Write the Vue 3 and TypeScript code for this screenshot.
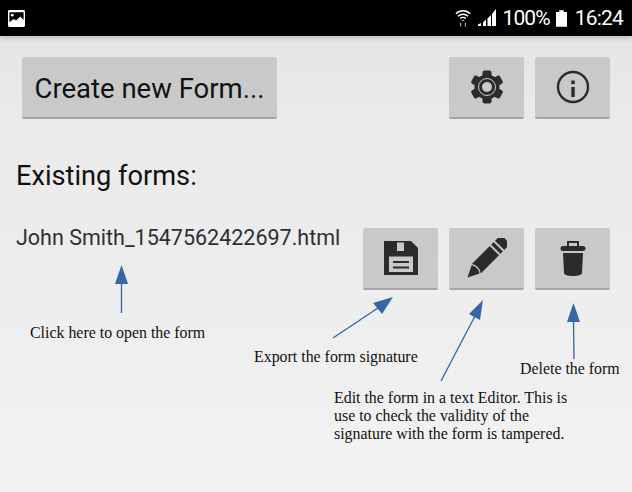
<template>
  <div class="screen">
    <header class="status-bar">
      <svg class="picture-icon" width="17" height="17" viewBox="0 0 18 18">
        <rect width="18" height="18" rx="1.5" fill="#fff" />
        <path d="M1.500 2.500h15v8l-3.500-3.500-4.500 4-2.500-1.500-4.500 3.500z" fill="#000" />
        <circle cx="4.500" cy="5.500" r="1.500" fill="#fff" />
      </svg>
      <div class="status-right">
        <svg width="16" height="20" viewBox="0 0 17 20" fill="none" stroke="#fff" stroke-width="1.500">
          <path d="M1 5.500a10.500 10.500 0 0 1 15 0" />
          <path d="M3.200 8.200a7.400 7.400 0 0 1 10.600 0" />
          <path d="M5.600 10.600a4 4 0 0 1 5.800 0" />
          <path d="M8.500 11.500l-1.600 1.400h3.200z" fill="#fff" stroke="none" />
          <path d="M6 15v4M11 15v4" stroke="#b5b5b5" stroke-width="1.200" />
        </svg>
        <svg class="signal" width="18" height="18" viewBox="0 0 18 18" fill="#fff">
          <path d="M0 15.500l3-1.500v3H0z" />
          <path d="M5 13.500l3-3V17H5z" />
          <path d="M9.500 9.500L13 6v11H9.500z" />
          <path d="M14 5l4-5v17h-4z" />
        </svg>
        <span class="percent">100%</span>
        <svg class="battery" width="11" height="17" viewBox="0 0 12 18" fill="#fff">
          <path d="M3.500 0h5v2h3.500v16H0V2h3.500z" />
        </svg>
        <span class="clock">16:24</span>
      </div>
    </header>

    <main class="content">
      <div class="top-row">
        <button class="btn create-btn">Create new Form...</button>
        <div class="btn-group">
          <button class="btn icon-btn" aria-label="Settings">
            <svg width="34" height="34" viewBox="0 0 34 34">
              <rect
                v-for="angle in GEAR_TEETH"
                :key="angle"
                x="12.500"
                y="0.500"
                width="9"
                height="33"
                rx="2"
                fill="#2b2b2b"
                :transform="`rotate(${angle} 17 17)`"
              />
              <circle cx="17" cy="17" r="12.500" fill="#2b2b2b" />
              <circle cx="17" cy="17" r="8.500" fill="none" stroke="#c9c9c9" stroke-width="1" />
              <circle cx="17" cy="17" r="5" fill="#c9c9c9" />
            </svg>
          </button>
          <button class="btn icon-btn" aria-label="About">
            <svg width="34" height="34" viewBox="0 0 34 34">
              <circle cx="17" cy="17" r="15" fill="none" stroke="#2b2b2b" stroke-width="2.400" />
              <rect x="15.300" y="17" width="3.400" height="10" fill="#2b2b2b" />
              <rect x="15.300" y="10.500" width="3.400" height="3.600" fill="#2b2b2b" />
            </svg>
          </button>
        </div>
      </div>

      <h2 class="section-title">Existing forms:</h2>

      <div class="form-row">
        <span class="form-name">John Smith_1547562422697.html</span>
        <div class="btn-group">
          <button class="btn icon-btn" aria-label="Export">
            <svg width="34" height="34" viewBox="0 0 34 34">
              <path d="M0 0h27l7 7v27H0z" fill="#2b2b2b" />
              <rect x="13" y="1.500" width="7" height="8.500" fill="#c9c9c9" />
              <rect x="5" y="15.500" width="24" height="15.500" fill="#c9c9c9" />
              <rect x="9" y="20" width="16" height="2" fill="#2b2b2b" />
              <rect x="9" y="25.500" width="16" height="2" fill="#2b2b2b" />
            </svg>
          </button>
          <button class="btn icon-btn" aria-label="Edit">
            <svg width="40" height="40" viewBox="0 0 40 40">
              <g transform="translate(0.500 39.500) rotate(-45)">
                <path
                  d="M0 0L13-6.500H49Q54-6.500 54-1.500V1.500Q54 6.500 49 6.500H13z"
                  fill="#2b2b2b"
                />
                <path d="M11-7.500Q17 0 11 7.500" fill="none" stroke="#c9c9c9" stroke-width="1.400" />
                <path d="M39-7V7M44.500-7V7" stroke="#c9c9c9" stroke-width="2" />
              </g>
            </svg>
          </button>
          <button class="btn icon-btn" aria-label="Delete">
            <svg width="26" height="36" viewBox="0 0 26 36">
              <path d="M8 7V2h10v5" fill="none" stroke="#2b2b2b" stroke-width="2" />
              <rect x="0.500" y="6" width="25" height="5" rx="2.500" fill="#2b2b2b" />
              <path d="M3 13h20l-1 20c-.2 1.800-4 3-9 3s-8.800-1.200-9-3z" fill="#2b2b2b" />
            </svg>
          </button>
        </div>
      </div>
    </main>

    <!-- annotations drawn over the screenshot -->
    <svg class="arrows" width="632" height="492" viewBox="0 0 632 492">
      <g v-for="arrow in ARROWS" :key="arrow.head">
        <line :x1="arrow.x1" :y1="arrow.y1" :x2="arrow.x2" :y2="arrow.y2" stroke="#3566a5" stroke-width="1.300" />
        <polygon :points="arrow.head" fill="#3566a5" />
      </g>
    </svg>
    <p class="note note-open">Click here to open the form</p>
    <p class="note note-export">Export the form signature</p>
    <p class="note note-delete">Delete the form</p>
    <p class="note note-edit">
      Edit the form in a text Editor. This is<br />
      use to check the validity of the<br />
      signature with the form is tampered.
    </p>
  </div>
</template>

<script setup lang="ts">
interface Arrow {
  x1: number;
  y1: number;
  x2: number;
  y2: number;
  head: string;
}

const GEAR_TEETH: number[] = [0, 60, 120];

const ARROWS: Arrow[] = [
  { x1: 121.5, y1: 313, x2: 121.5, y2: 282, head: '121.5,265 115,284 128,284' },
  { x1: 333, y1: 338, x2: 378, y2: 308, head: '393,297 373,303 382,314' },
  { x1: 441, y1: 381, x2: 475, y2: 316, head: '483,300 469,314 480,320' },
  { x1: 574, y1: 359, x2: 573.5, y2: 320, head: '573.5,303 567,322 580,322' },
];
</script>

<style>
html,
body {
  margin: 0;
  background: #ececec;
}
</style>

<style scoped>
.screen {
  position: relative;
  width: 632px;
  height: 492px;
  overflow: hidden;
  font-family: Roboto, sans-serif;
  background: linear-gradient(#e5e5e5 36px, #ebebeb 130px, #ececec 250px, #f3f3f3 100%);
}

.status-bar {
  display: flex;
  align-items: center;
  justify-content: space-between;
  height: 36px;
  padding: 0 9px 0 8px;
  box-sizing: border-box;
  background: #000;
  color: #fff;
  box-shadow: 0 1px 6px rgba(0, 0, 0, 0.25);
}

.status-right {
  display: flex;
  align-items: center;
  font-size: 21px;
}

.signal {
  margin-left: 7px;
}

.percent {
  margin-left: 7px;
  letter-spacing: -0.9px;
}

.battery {
  margin-left: 6px;
}

.clock {
  margin-left: 8px;
  letter-spacing: -0.8px;
}

.content {
  padding: 21px 22px 0 16px;
}

.top-row {
  display: flex;
  justify-content: space-between;
  padding-left: 6px;
}

.btn {
  display: flex;
  align-items: center;
  justify-content: center;
  height: 62px;
  padding: 0;
  border: none;
  border-bottom: 2px solid #a6a6a6;
  border-radius: 2px;
  background: #c9c9c9;
  font-family: inherit;
  color: #111;
}

.create-btn {
  width: 255px;
  padding-top: 2px;
  font-size: 27.5px;
}

.btn-group {
  display: flex;
  gap: 11px;
}

.icon-btn {
  width: 75px;
}

.section-title {
  margin: 40px 0 0;
  font-size: 27.2px;
  font-weight: 400;
  line-height: 34px;
  color: #111;
}

.form-row {
  display: flex;
  justify-content: space-between;
  margin-top: 35px;
}

.form-name {
  font-size: 21.5px;
  line-height: 20px;
  color: #2c2f36;
}

.arrows {
  position: absolute;
  top: 0;
  left: 0;
  pointer-events: none;
}

.note {
  position: absolute;
  margin: 0;
  font-family: 'Liberation Serif', serif;
  font-size: 15.9px;
  line-height: 18px;
  color: #111;
  white-space: nowrap;
}

.note-open {
  left: 30px;
  top: 324px;
}

.note-export {
  left: 254px;
  top: 348px;
}

.note-delete {
  left: 520px;
  top: 360px;
}

.note-edit {
  left: 334px;
  top: 389px;
}
</style>
